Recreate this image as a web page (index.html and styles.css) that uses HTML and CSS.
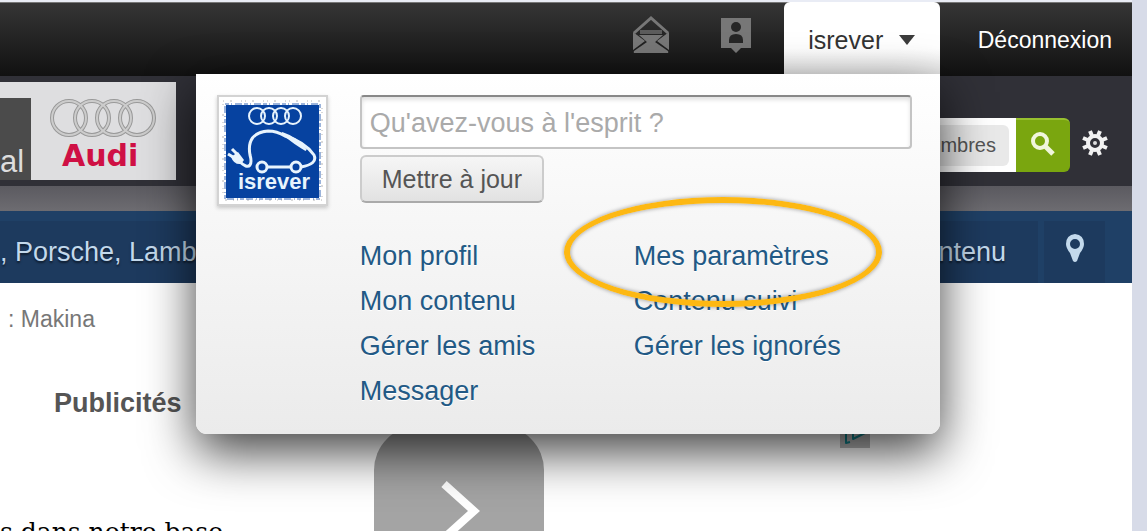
FILE: index.html
```html
<!DOCTYPE html>
<html lang="fr">
<head>
  <meta charset="UTF-8">
  <meta name="viewport" content="width=device-width, initial-scale=1.0">
  <title>Forum Audi</title>
  <link rel="stylesheet" href="styles.css">
</head>
<body>
<div class="page">

  <!-- User bar -->
  <header class="topbar">
    <a href="#" class="icon-link" aria-label="Messagerie">
      <svg width="38" height="40" viewBox="0 0 38 40">
        <path d="M2 18 L19 3 L36 18" fill="none" stroke="#777" stroke-width="3"/>
        <path d="M8 17 H30" stroke="#5c5c5c" stroke-width="4"/>
        <path d="M1 17 L13 26 L1 35 Z M37 17 L25 26 L37 35 Z" fill="#777"/>
        <path d="M7 20 H31 L22 28 H16 Z" fill="#777"/>
        <path d="M3 38 Q1 38 2 36 L15 27 H23 L36 36 Q37 38 35 38 Z" fill="#777"/>
      </svg>
    </a>
    <a href="#" class="icon-link" aria-label="Notifications">
      <svg width="32" height="36" viewBox="0 0 32 36">
        <path d="M1 1 H31 V31 H21 L16 36 L11 31 H1 Z" fill="#777"/>
        <circle cx="16" cy="10" r="5" fill="#262626"/>
        <path d="M9 26 V23 Q9 17 16 17 Q23 17 23 23 V26 Z" fill="#262626"/>
      </svg>
    </a>
    <div class="user">
      <button type="button" class="user-tab">isrever
        <svg width="16" height="10" viewBox="0 0 16 10"><path d="M0 0 H16 L8 10 Z" fill="#3c3c3c"/></svg>
      </button>

      <!-- User menu -->
      <div class="user-menu">
        <svg class="avatar" viewBox="0 0 111 111" role="img" aria-label="isrever">
          <rect width="111" height="111" fill="#d3d3d3"/>
          <rect x="2" y="2" width="107" height="107" fill="#fff"/>
          <rect x="6" y="6" width="99" height="99" fill="none" stroke="#b4b4b4" stroke-dasharray="1 6 2 9 1 3"/>
          <rect x="9" y="10" width="93" height="93" fill="#0642a0"/>
          <rect x="8" y="9" width="95" height="95" fill="none" stroke="#3b6bb8" stroke-dasharray="4 2 1 3 7 2"/>
          <g fill="none" stroke="#e8f4fd" stroke-width="2">
            <circle cx="40" cy="21" r="8"/>
            <circle cx="52" cy="21" r="8"/>
            <circle cx="64" cy="21" r="8"/>
            <circle cx="76" cy="21" r="8"/>
          </g>
          <g fill="none" stroke="#e8f4fd" stroke-width="3">
            <path d="M22 66 Q30 74 33 70 Q35 67 33 60 Q29 38 51 36 Q60 36 68 41 Q88 47 97 60 Q101 69 84 72"/>
            <path d="M50 72 H74"/>
            <circle cx="45" cy="72" r="5"/>
            <circle cx="79" cy="72" r="5"/>
          </g>
          <path d="M65 38 Q80 43 89 55 Q78 49 65 38 Z" fill="#e8f4fd" stroke="#e8f4fd" stroke-width="2"/>
          <path d="M14 62 L21 57 L27 65 L24 69 Q17 70 14 62 Z" fill="#e8f4fd"/>
          <path d="M16 62 L11 59 M20 59 L15 54" stroke="#e8f4fd" stroke-width="3"/>
          <text x="57" y="94" text-anchor="middle" class="avatar-name">isrever</text>
        </svg>
        <div class="menu-body">
          <form class="status">
            <input type="text" placeholder="Qu'avez-vous à l'esprit ?" aria-label="Statut">
            <button type="button">Mettre à jour</button>
          </form>
          <ul class="menu-links">
            <li><a href="#">Mon profil</a></li>
            <li class="circled"><a href="#">Mes paramètres</a></li>
            <li><a href="#">Mon contenu</a></li>
            <li><a href="#">Contenu suivi</a></li>
            <li><a href="#">Gérer les amis</a></li>
            <li><a href="#">Gérer les ignorés</a></li>
            <li><a href="#">Messager</a></li>
          </ul>
        </div>
      </div>
    </div>
    <a href="#" class="logout">Déconnexion</a>
  </header>

  <!-- Branding -->
  <div class="branding">
    <div class="banner">
      <span class="banner-name">al</span>
      <div class="audi">
        <svg width="108" height="40" viewBox="0 0 108 40">
          <g fill="none" stroke="#999" stroke-width="4">
            <circle cx="20" cy="20" r="17"/>
            <circle cx="43" cy="20" r="17"/>
            <circle cx="65" cy="20" r="17"/>
            <circle cx="88" cy="20" r="17"/>
          </g>
          <g fill="none" stroke="#ccc" stroke-width="2">
            <circle cx="20" cy="20" r="17"/>
            <circle cx="43" cy="20" r="17"/>
            <circle cx="65" cy="20" r="17"/>
            <circle cx="88" cy="20" r="17"/>
          </g>
        </svg>
        <span>Audi</span>
      </div>
    </div>
    <div class="search">
      <div class="search-field"><span>mbres</span></div>
      <button type="button" aria-label="Rechercher">
        <svg width="24" height="24" viewBox="0 0 24 24" fill="none" stroke="#f0f6dc">
          <circle cx="9" cy="9" r="7" stroke-width="4"/>
          <path d="M14 14 L22 22" stroke-width="5"/>
        </svg>
      </button>
      <a href="#" class="gear" aria-label="Recherche avancée">
        <svg width="26" height="26" viewBox="0 0 26 26">
          <g stroke="#f2f2f2" stroke-width="4">
            <path d="M8 1 L18 25 M18 1 L8 25 M1 8 L25 18 M1 18 L25 8"/>
          </g>
          <circle cx="13" cy="13" r="7" fill="#303037" stroke="#f2f2f2" stroke-width="4"/>
          <circle cx="13" cy="13" r="2" fill="#ddd"/>
        </svg>
      </a>
    </div>
  </div>
  <div class="strip"></div>

  <!-- Navigation -->
  <nav class="nav">
    <a href="#" class="nav-main">, Porsche, Lamb</a>
    <a href="#" class="nav-content">ntenu</a>
    <a href="#" class="nav-map" aria-label="Carte">
      <svg width="20" height="28" viewBox="0 0 20 28">
        <path fill-rule="evenodd" fill="#c3d9ec" d="M10 0 Q19 1 19 10 Q19 14 15 19 L12 27 Q10 29 8 27 L5 19 Q1 14 1 10 Q1 1 10 0 Z M10 5 A5 5 0 1 0 10 15 A5 5 0 1 0 10 5 Z"/>
      </svg>
    </a>
  </nav>

  <!-- Content -->
  <main class="content">
    <div class="side">
      <p class="crumb">: Makina</p>
      <h2>Publicités</h2>
      <p class="ad-text">s dans notre base</p>
    </div>
    <div class="ad">
      <button type="button" class="ad-next" aria-label="Suivant">
        <svg width="40" height="64" viewBox="0 0 40 64"><path d="M3 4 L33 31 L3 58" fill="none" stroke="#fff" stroke-width="8"/></svg>
      </button>
      <a href="#" class="ad-choices" aria-label="AdChoices">
        <svg width="30" height="30" viewBox="0 0 30 30" fill="none" stroke="#12868f" stroke-width="2" stroke-linejoin="round">
          <path d="M6 4 V25 L10 24"/>
          <path d="M13 4 V21 L27 14 Z"/>
        </svg>
      </a>
    </div>
  </main>

</div>
</body>
</html>
```

FILE: styles.css
```css
/* Reset & base */
* { margin: 0; padding: 0; box-sizing: border-box; }
body {
  font-family: "Liberation Sans", Arial, sans-serif;
  background: #d7dbe8;
  color: #555;
  height: 100vh;
  overflow: hidden;
}
a { text-decoration: none; }
button, input { font-family: inherit; }
svg { display: block; flex-shrink: 0; }

.page {
  margin-right: 15px;
  min-height: 100vh;
  background: #fff;
  border-top: 2px solid #e9ecf5;
}

/* User bar */
.topbar {
  display: flex;
  justify-content: flex-end;
  align-items: center;
  height: 74px;
  background: linear-gradient(#777 1px, #353535 1px, #111);
}
.icon-link { margin-right: 50px; padding-bottom: 8px; }
.icon-link + .icon-link { margin-right: 32px; }
.user { position: relative; align-self: flex-start; }
.user-tab {
  display: flex;
  align-items: center;
  justify-content: center;
  gap: 16px;
  width: 156px;
  height: 72px;
  padding-top: 4px;
  border: none;
  border-radius: 6px 6px 0 0;
  background: linear-gradient(#fff 65%, #e8e8e8);
  color: #333;
  font-size: 25px;
}
.logout { padding: 2px 20px 0 38px; color: #fff; font-size: 23px; }

/* User menu */
.user-menu {
  position: absolute;
  top: 100%;
  right: 0;
  z-index: 10;
  display: flex;
  gap: 32px;
  width: 744px;
  padding: 21px 28px 20px 21px;
  border-radius: 0 0 11px 11px;
  background: linear-gradient(#fff, #ebebeb);
  box-shadow: 0 18px 50px rgba(0, 0, 0, 0.75);
}
.avatar { width: 111px; height: 111px; box-shadow: 0 2px 4px rgba(0, 0, 0, 0.2); }
.avatar-name { font-size: 22px; font-weight: bold; fill: #e8f4fd; }
.menu-body { flex: 1; }
.status input {
  display: block;
  width: 100%;
  height: 54px;
  padding: 2px 8px 0;
  border: 2px solid #c4c4c4;
  border-top-color: #888;
  border-radius: 4px;
  background: #fff;
  box-shadow: inset 0 3px 4px rgba(0, 0, 0, 0.12);
  font-size: 27px;
}
.status input::placeholder { color: #aaa; }
.status button {
  height: 48px;
  margin-top: 6px;
  padding: 0 20px;
  border: 2px solid #ccc;
  border-bottom-color: #aaa;
  border-radius: 6px;
  background: linear-gradient(#f6f6f6, #e2e2e2);
  color: #555;
  font-size: 25px;
}
.menu-links {
  display: grid;
  grid-template-columns: 274px 1fr;
  margin-top: 31px;
  list-style: none;
  font-size: 27px;
  line-height: 45px;
}
.menu-links a { color: #225985; text-shadow: 0 1px 0 #fff; }
.circled { position: relative; }
.circled::after {
  content: "";
  position: absolute;
  box-sizing: border-box;
  top: -37px;
  left: -70px;
  width: 318px;
  height: 110px;
  border: 6px solid #fdb813;
  border-radius: 50%;
  box-shadow: 0 0 4px rgba(0, 0, 0, 0.4), inset 0 0 4px rgba(0, 0, 0, 0.4);
  pointer-events: none;
}

/* Branding */
.branding {
  display: flex;
  justify-content: space-between;
  align-items: flex-start;
  height: 110px;
  padding-top: 6px;
  background: #303037;
}
.banner {
  display: flex;
  align-items: flex-end;
  width: 176px;
  height: 98px;
  background: #dedee0;
}
.banner-name {
  display: flex;
  align-items: flex-end;
  width: 31px;
  height: 82px;
  background: #4b4b4b;
  color: #ddd;
  font-size: 31px;
}
.audi { padding: 0 0 6px 18px; }
.audi span {
  display: block;
  padding-left: 13px;
  color: #cf1044;
  font-family: "DejaVu Sans", sans-serif;
  font-size: 30px;
  font-weight: bold;
  line-height: 36px;
}
.search { display: flex; align-items: center; margin: 36px 24px 0 0; }
.search-field {
  display: flex;
  align-items: center;
  height: 54px;
  padding: 0 7px;
  background: #fff;
}
.search-field span {
  padding: 0 13px;
  border-radius: 6px;
  background: #e9e9e9;
  color: #555;
  font-size: 20px;
  line-height: 41px;
}
.search button {
  display: flex;
  align-items: center;
  justify-content: center;
  width: 54px;
  height: 54px;
  padding-bottom: 4px;
  border: none;
  border-top: 2px solid #97c02f;
  border-radius: 0 6px 6px 0;
  background: #7aa60f;
}
.gear { margin-left: 12px; padding-bottom: 5px; }
.strip { height: 25px; background: linear-gradient(#5b5a60, #6d6c71); }

/* Navigation */
.nav {
  display: flex;
  gap: 6px;
  height: 72px;
  padding: 10px 27px 0 0;
  background: #1f4066;
}
.nav a {
  display: flex;
  align-items: center;
  background: #1d3a5e;
  color: #c3d9ec;
  font-size: 27px;
  text-shadow: 0 2px 2px rgba(0, 0, 0, 0.5);
}
.nav .nav-main { flex: 1; margin-right: -6px; }
.nav .nav-content { padding-right: 32px; }
.nav .nav-map { justify-content: center; width: 61px; padding-bottom: 8px; }

/* Content */
.content { display: flex; }
.side { width: 374px; }
.crumb { padding: 22px 8px 0; color: #777; font-size: 23px; line-height: 28px; }
.side h2 { padding: 54px 54px 0; font-size: 27px; line-height: 32px; }
.ad-text {
  padding-top: 98px;
  color: #000;
  font-family: "DejaVu Serif", serif;
  font-size: 25px;
  line-height: 30px;
}
.ad {
  display: flex;
  justify-content: space-between;
  align-items: flex-start;
  width: 496px;
  padding-top: 135px;
}
.ad-next {
  display: flex;
  justify-content: center;
  width: 170px;
  height: 180px;
  margin-top: 8px;
  padding: 54px 0 0 4px;
  border: none;
  border-radius: 44px;
  background: #a4a4a4;
}
.ad-choices { background: #bbb; }
```
